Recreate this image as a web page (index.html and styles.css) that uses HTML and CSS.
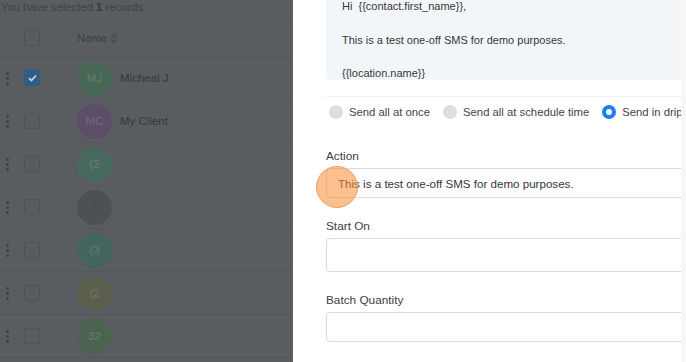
FILE: index.html
```html
<!DOCTYPE html>
<html lang="en">

<head>
    <meta charset="UTF-8">
    <meta name="viewport" content="width=device-width, initial-scale=1.0">
    <link rel="stylesheet" href="styles.css">
    <title>Bulk Action</title>
</head>

<body>
    <div class="page">
        <div class="backdrop">
            <p class="selected-note">You have selected <b>1</b> records.</p>
            <div class="row head">
                <span class="kebab empty"></span>
                <span class="check"></span>
                <span class="col-name">Name
                    <svg class="sort" width="8" height="11" viewBox="0 0 8 11">
                        <path d="M4 0 L8 4.5 H0 Z M4 11 L8 6.5 H0 Z" />
                    </svg>
                </span>
            </div>
            <div class="row">
                <span class="kebab"><i></i><i></i><i></i></span>
                <span class="check checked">
                    <svg width="9" height="8" viewBox="0 0 9 8">
                        <path d="M1 4.2 L3.4 6.5 L8 1.5" />
                    </svg>
                </span>
                <span class="avatar green">MJ</span>
                <span class="name">Micheal J.</span>
            </div>
            <div class="row">
                <span class="kebab"><i></i><i></i><i></i></span>
                <span class="check"></span>
                <span class="avatar purple">MC</span>
                <span class="name">My Client</span>
            </div>
            <div class="row">
                <span class="kebab"><i></i><i></i><i></i></span>
                <span class="check"></span>
                <span class="avatar teal-green">(2</span>
            </div>
            <div class="row">
                <span class="kebab"><i></i><i></i><i></i></span>
                <span class="check"></span>
                <span class="avatar grey">?</span>
            </div>
            <div class="row">
                <span class="kebab"><i></i><i></i><i></i></span>
                <span class="check"></span>
                <span class="avatar teal">(3</span>
            </div>
            <div class="row">
                <span class="kebab"><i></i><i></i><i></i></span>
                <span class="check"></span>
                <span class="avatar olive">(2</span>
            </div>
            <div class="row">
                <span class="kebab"><i></i><i></i><i></i></span>
                <span class="check"></span>
                <span class="avatar leaf">32</span>
            </div>
        </div>

        <div class="drawer">
            <div class="drawer-body">
                <div class="preview">
                    <p>Hi&nbsp; {{contact.first_name}},</p>
                    <p>This is a test one-off SMS for demo purposes.</p>
                    <p>{{location.name}}</p>
                </div>

                <div class="send-options">
                    <label class="radio"><span class="dot"></span>Send all at once</label>
                    <label class="radio"><span class="dot"></span>Send all at schedule time</label>
                    <label class="radio"><span class="dot on"></span>Send in drip mode</label>
                </div>

                <div class="field first">
                    <label class="field-label">Action</label>
                    <div class="input">
                        <span>This is a test one-off SMS for demo purposes.</span>
                        <span class="click-mark"></span>
                    </div>
                </div>

                <div class="field">
                    <label class="field-label">Start On</label>
                    <div class="input tall"></div>
                </div>

                <div class="field">
                    <label class="field-label">Batch Quantity</label>
                    <div class="input"></div>
                </div>
            </div>
            <div class="scroll-strip"></div>
        </div>
    </div>
</body>

</html>
```

FILE: styles.css
```css
* {
    margin: 0;
    padding: 0;
    box-sizing: border-box;
}

body {
    font-family: 'Liberation Sans', Arial, sans-serif;
    overflow: hidden;
    background: #595d61;
}

.page {
    height: 362px;
    display: flex;
}

/* dimmed contact list behind the drawer */
.backdrop {
    width: 293px;
    flex-shrink: 0;
    background: #595d61;
    color: #35383b;
    overflow: hidden;
}

.selected-note {
    height: 20px;
    padding-left: 1px;
    font-size: 11.3px;
    line-height: 14px;
    color: #3f4245;
    border-bottom: 1px solid #55595d;
}

.selected-note b {
    color: #35383b;
}

.row {
    height: 43px;
    display: flex;
    align-items: center;
    border-bottom: 1px solid #53575b;
}

.row.head {
    height: 37px;
}

.kebab {
    width: 24px;
    display: flex;
    flex-direction: column;
    align-items: center;
    gap: 2px;
    padding-left: 1px;
    margin-left: -5px;
    margin-right: 5px;
}

.kebab i {
    width: 3px;
    height: 3px;
    border-radius: 50%;
    background: #3f4346;
}

.check {
    width: 16px;
    height: 16px;
    border: 1px solid #4e5256;
    border-radius: 3px;
    display: flex;
    align-items: center;
    justify-content: center;
    margin-right: 37px;
}

.check.checked {
    background: #2e5e87;
    border-color: #2e5e87;
}

.check svg path {
    fill: none;
    stroke: #c9d3dc;
    stroke-width: 1.8;
}

.col-name {
    font-size: 11.3px;
    color: #3b3e41;
    display: flex;
    align-items: center;
    gap: 3px;
}

.sort path {
    fill: #4b4f53;
}

.avatar {
    width: 35px;
    height: 35px;
    border-radius: 50%;
    display: flex;
    align-items: center;
    justify-content: center;
    font-size: 11.5px;
    margin-right: 8px;
}

.avatar.green { background: #486856; color: #657d6e; }
.avatar.purple { background: #5c4d68; color: #75697f; }
.avatar.teal-green { background: #486a5e; color: #668176; }
.avatar.grey { background: #4d5155; color: #45494d; }
.avatar.teal { background: #43655d; color: #657d77; }
.avatar.olive { background: #5b5f4e; color: #747768; }
.avatar.leaf { background: #4c644f; color: #6a7c6c; }

.name {
    font-size: 11.5px;
    color: #35383b;
}

/* right drawer */
.drawer {
    flex: 1;
    display: flex;
    background: #fff;
    overflow: hidden;
}

.drawer-body {
    flex: 1;
    padding-left: 33px;
    overflow: hidden;
    color: #3a3f47;
}

.preview {
    width: 420px;
    height: 90px;
    margin-top: -10px;
    padding: 8px 16px 0;
    background: #f3f6f9;
    border-radius: 0 0 4px 4px;
    font-size: 11px;
    color: #33373d;
}

.preview p {
    line-height: 17px;
    margin-bottom: 16.5px;
}

.send-options {
    width: 420px;
    margin-top: 16px;
    border-top: 1px solid #eeeff1;
    display: flex;
    align-items: center;
    height: 31px;
    padding-left: 3px;
    white-space: nowrap;
}

.radio {
    display: flex;
    align-items: center;
    font-size: 11.3px;
    color: #3f444b;
    margin-right: 13px;
}

.dot {
    width: 14px;
    height: 14px;
    border-radius: 50%;
    background: #dcdee2;
    margin-right: 6px;
}

.dot.on {
    background: #fff;
    border: 4px solid #1d7ff0;
}

.field {
    margin-top: 20px;
}

.field.first {
    margin-top: 21px;
}

.field-label {
    display: block;
    font-size: 11.8px;
    line-height: 16px;
    color: #3a404a;
    margin-bottom: 4px;
}

.input {
    position: relative;
    width: 420px;
    height: 30px;
    border: 1px solid #d9dbde;
    border-radius: 4px;
    display: flex;
    align-items: center;
    padding-left: 11px;
    font-size: 11.6px;
    color: #33373d;
}

.input.tall {
    height: 34px;
}

.click-mark {
    position: absolute;
    left: -11px;
    top: -3px;
    width: 42px;
    height: 42px;
    border-radius: 50%;
    background: rgba(246, 140, 52, 0.55);
    border: 1.5px solid #f5a060;
}

.scroll-strip {
    width: 5px;
    background: #f7f7f7;
}
```
